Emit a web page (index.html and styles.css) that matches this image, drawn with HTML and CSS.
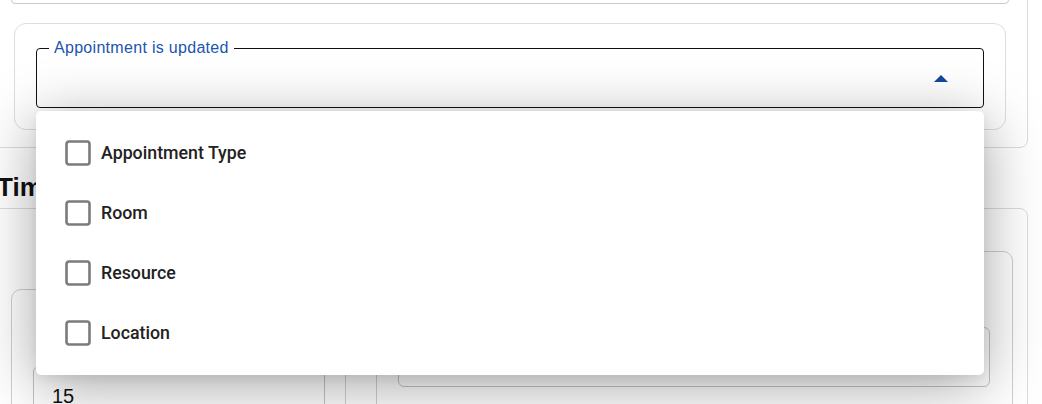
FILE: index.html
```html
<!DOCTYPE html>
<html lang="en">
<head>
<meta charset="utf-8">
<title>Appointment notifications</title>
<link rel="stylesheet" href="styles.css">
</head>
<body>
<div class="viewport">
  <div class="page">
    <section class="outer-card">
      <div class="top-field"></div>
      <div class="inner-card">
        <div class="select-wrap">
          <fieldset class="select">
            <legend class="select-label">Appointment is updated</legend>
            <div class="select-body">
              <svg class="arrow" width="14" height="7" viewBox="0 0 14 7"><path d="M0 7 L7 0 L14 7 Z" fill="#1546a0"/></svg>
            </div>
          </fieldset>
          <ul class="menu">
            <li class="menu-item">
              <svg class="checkbox" width="26" height="26" viewBox="0 0 26 26"><rect x="1.5" y="1.5" width="23" height="23" rx="2.5" fill="none" stroke="#7b7b7b" stroke-width="2.6"/></svg>
              <span>Appointment Type</span>
            </li>
            <li class="menu-item">
              <svg class="checkbox" width="26" height="26" viewBox="0 0 26 26"><rect x="1.5" y="1.5" width="23" height="23" rx="2.5" fill="none" stroke="#7b7b7b" stroke-width="2.6"/></svg>
              <span>Room</span>
            </li>
            <li class="menu-item">
              <svg class="checkbox" width="26" height="26" viewBox="0 0 26 26"><rect x="1.5" y="1.5" width="23" height="23" rx="2.5" fill="none" stroke="#7b7b7b" stroke-width="2.6"/></svg>
              <span>Resource</span>
            </li>
            <li class="menu-item">
              <svg class="checkbox" width="26" height="26" viewBox="0 0 26 26"><rect x="1.5" y="1.5" width="23" height="23" rx="2.5" fill="none" stroke="#7b7b7b" stroke-width="2.6"/></svg>
              <span>Location</span>
            </li>
          </ul>
        </div>
      </div>
    </section>

    <h2 class="section-title">Time</h2>

    <section class="time-card">
      <div class="left-card">
        <div class="num-input">15</div>
      </div>
      <div class="right-card">
        <div class="wide-box"></div>
      </div>
    </section>
  </div>
</div>
</body>
</html>
```

FILE: styles.css
```css
* { box-sizing: border-box; }
html, body { margin: 0; padding: 0; background: #fff; }
.viewport {
  width: 1042px;
  height: 404px;
  overflow: hidden;
  font-family: Roboto, "Liberation Sans", sans-serif;
}
.page {
  margin-left: -10px;
  margin-top: -60px;
  width: 1040px;
}

/* top notification card */
.outer-card {
  width: 1038px;
  height: 208px;
  border: 1px solid #dcdcdc;
  border-radius: 8px;
  padding: 23px 0 0 20px;
}
.top-field {
  width: 998px;
  height: 40px;
  border: 1px solid #c9c9c9;
  border-radius: 4px;
  background: #fff;
}
.inner-card {
  margin: 19px 0 0 3px;
  width: 992px;
  height: 107px;
  border: 1px solid #dedede;
  border-radius: 12px;
  padding: 16px 21px 0 21px;
}
.select-wrap {
  position: relative;
  width: 948px;
}
.select {
  margin: 0;
  padding: 0 0 0 12px;
  height: 68px;
  border: 1px solid #111;
  border-radius: 4px;
  min-width: 0;
}
.select-label {
  padding: 0 5px;
  font-family: "Liberation Sans", Arial, sans-serif;
  font-size: 16px;
  line-height: 16px;
  letter-spacing: 0.3px;
  color: #1c54ae;
}
.select-body {
  display: flex;
  justify-content: flex-end;
  padding: 19px 35px 0 0;
}
.arrow { display: block; }

/* dropdown menu */
.menu {
  position: absolute;
  z-index: 10;
  left: 0;
  right: 0;
  top: calc(100% + 3px);
  margin: 0;
  padding: 12px 0 12px;
  list-style: none;
  background: #fff;
  border-radius: 5px;
  box-shadow: 0 10px 60px rgba(0, 0, 0, 0.36), 0 4px 10px rgba(0, 0, 0, 0.06);
}
.menu-item {
  height: 60px;
  display: flex;
  align-items: center;
  gap: 10px;
  padding-left: 29px;
  font-family: Roboto, "Liberation Sans", sans-serif;
  font-size: 17.8px;
  font-weight: 500;
  color: #222;
}
.menu-item span { margin-top: -1px; }
.checkbox { display: block; flex: none; }

/* time section */
.section-title {
  margin: 24px 0 6px;
  padding-left: 7px;
  font-family: "Liberation Sans", Arial, sans-serif;
  font-size: 26px;
  line-height: 30px;
  font-weight: 700;
  color: #111;
}
.time-card {
  width: 1038px;
  height: 260px;
  border: 1px solid #dcdcdc;
  border-radius: 8px;
  padding: 42px 14px 0 20px;
  display: flex;
  align-items: flex-start;
  gap: 30px;
}
.left-card {
  margin-top: 38px;
  width: 335px;
  height: 200px;
  border: 1px solid #d0d0d0;
  border-radius: 10px;
  padding: 76px 20px 0 21px;
}
.num-input {
  width: 292px;
  height: 54px;
  border: 1px solid #c4c4c4;
  border-radius: 6px;
  padding: 18px 0 0 18px;
  font-family: "Liberation Sans", Arial, sans-serif;
  font-size: 20px;
  color: #111;
}
.right-card {
  width: 637px;
  height: 220px;
  border: 1px solid #d0d0d0;
  border-radius: 10px;
  padding: 75px 22px 0 21px;
}
.wide-box {
  height: 60px;
  border: 1px solid #c4c4c4;
  border-radius: 6px;
}
```
